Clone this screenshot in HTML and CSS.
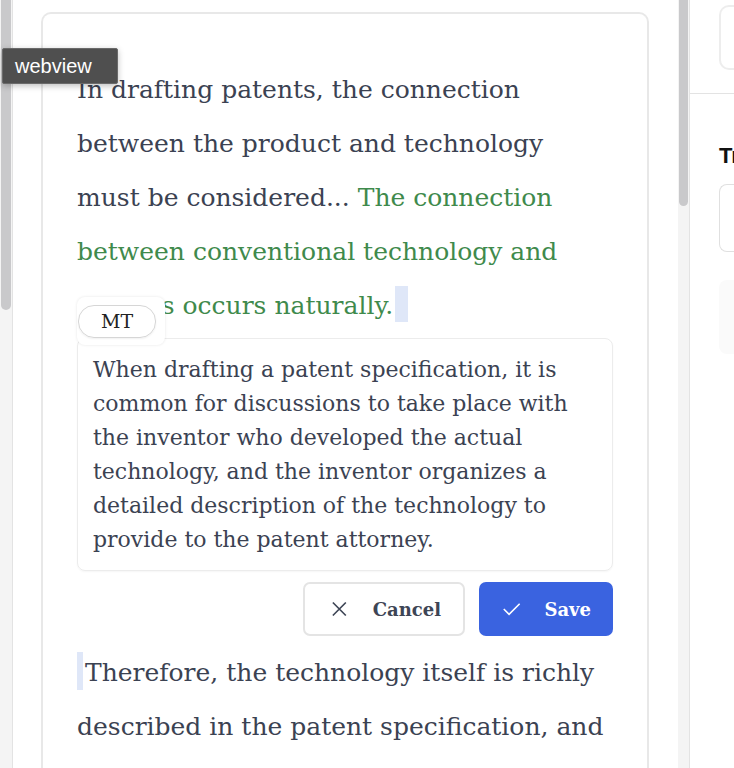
FILE: index.html
```html
<!DOCTYPE html>
<html>
<head>
<meta charset="utf-8">
<link rel="stylesheet" href="styles.css">
</head>
<body>
<div class="app">
  <div class="scroll left"><div class="thumb left-thumb"></div></div>
  <main class="main">
    <div class="card">
      <p class="para">In drafting patents, the connection between the product and technology must be considered... <span class="green">The connection between conventional technology and sources occurs naturally.</span><span class="caret"></span></p>
      <div class="editor">
        <div class="badge-wrap"><span class="badge">MT</span></div>
        <div class="edit-box">When drafting a patent specification, it is common for discussions to take place with the inventor who developed the actual technology, and the inventor organizes a detailed description of the technology to provide to the patent attorney.</div>
        <div class="actions">
          <button class="btn cancel">
            <svg width="18" height="18" viewBox="0 0 18 18"><path d="M2 2L16 16M16 2L2 16" stroke="#3d4555" stroke-width="1.8" fill="none"/></svg>
            <span>Cancel</span>
          </button>
          <button class="btn save">
            <svg width="22" height="18" viewBox="0 0 22 18"><path d="M2 9L8 15L20 3" stroke="#fff" stroke-width="1.8" fill="none"/></svg>
            <span>Save</span>
          </button>
        </div>
      </div>
      <p class="para second"><span class="caret2"></span>Therefore, the technology itself is richly described in the patent specification, and the inventor's perspective is reflected.</p>
    </div>
  </main>
  <div class="scroll right"><div class="thumb right-thumb"></div></div>
  <aside class="side">
    <div class="side-top"><div class="side-box"></div></div>
    <div class="side-body">
      <div class="side-title">Translation</div>
      <div class="side-input"></div>
      <div class="side-gray"></div>
    </div>
  </aside>
</div>
<div class="tooltip">webview</div>
</body>
</html>
```
FILE: styles.css
```css
html, body {
  margin: 0;
  padding: 0;
  width: 734px;
  height: 768px;
  overflow: hidden;
  background: #fff;
}
.app {
  display: flex;
  height: 768px;
}
.scroll {
  width: 12px;
  flex: none;
  background: #f4f4f4;
  border-right: 1px solid #e3e3e3;
  padding: 0 1px;
  box-sizing: border-box;
}
.scroll.left { width: 13px; }
.thumb {
  background: #c9c9cb;
  border-radius: 0 0 5px 5px;
}
.left-thumb { height: 310px; }
.right-thumb { height: 206px; }
.main {
  width: 665px;
  flex: none;
  padding: 12px 29px 0 28px;
  box-sizing: border-box;
  overflow: hidden;
}
.card {
  border: 2px solid #e8e8e8;
  border-bottom: none;
  border-radius: 10px 10px 0 0;
  height: 800px;
  padding: 49px 34px 0 34px;
  box-sizing: border-box;
}
.para {
  margin: 0;
  font-family: "DejaVu Serif", serif;
  font-size: 25px;
  line-height: 54px;
  color: #3b4252;
}
.green { color: #3f8a4c; }
.caret {
  display: inline-block;
  width: 13px;
  height: 36px;
  background: #dfe7f8;
  vertical-align: -8px;
  margin-left: 2px;
}
.caret2 {
  display: inline-block;
  width: 6px;
  height: 38px;
  background: #dfe7f8;
  vertical-align: -9px;
  margin-right: 2px;
}
.editor {
  position: relative;
  margin-top: 5px;
}
.badge-wrap {
  position: absolute;
  left: 0;
  top: -41px;
  width: 88px;
  height: 48px;
  box-sizing: border-box;
  background: #fff;
  border-radius: 8px;
  box-shadow: 0 0 3px rgba(0,0,0,0.1);
}
.badge {
  display: block;
  border: 1px solid #d6d6d6;
  border-radius: 16px;
  width: 78px;
  height: 33px;
  box-sizing: border-box;
  text-align: center;
  font-family: "DejaVu Serif", serif;
  font-size: 19px;
  line-height: 31px;
  color: #222;
  margin: 8px 0 0 1px;
  box-shadow: 0 1px 2px rgba(0,0,0,0.06);
}
.edit-box {
  border: 1px solid #ececec;
  border-radius: 8px;
  padding: 14px 15px 13px 15px;
  font-family: "DejaVu Serif", serif;
  font-size: 22px;
  line-height: 34px;
  color: #3b4252;
  box-shadow: 0 1px 2px rgba(0,0,0,0.04);
}
.actions {
  display: flex;
  justify-content: flex-end;
  gap: 14px;
  margin-top: 11px;
  margin-bottom: 10px;
}
.btn {
  display: flex;
  align-items: center;
  height: 54px;
  border-radius: 7px;
  font-family: "DejaVu Serif", serif;
  font-size: 18px;
  font-weight: bold;
  padding: 0 22px 0 26px;
  gap: 25px;
  box-sizing: border-box;
}
.cancel {
  width: 162px;
  background: #fff;
  border: 2px solid #e4e4e4;
  color: #3d4555;
}
.save {
  width: 134px;
  background: #3a63e0;
  border: none;
  color: #fff;
  padding-left: 23px;
  gap: 23px;
}
.side {
  width: 44px;
  flex: none;
  overflow: hidden;
}
.side-top {
  height: 94px;
  border-bottom: 1px solid #e3e3e3;
  padding: 5px 0 0 29px;
  box-sizing: border-box;
}
.side-box {
  width: 80px;
  height: 65px;
  border: 2px solid #ededed;
  border-right: none;
  border-radius: 10px 0 0 10px;
  box-sizing: border-box;
}
.side-body {
  padding: 50px 0 0 29px;
}
.side-title {
  font-family: "Liberation Sans", sans-serif;
  font-size: 22px;
  font-weight: bold;
  color: #111;
  white-space: nowrap;
  height: 24px;
  line-height: 24px;
}
.side-input {
  margin-top: 16px;
  width: 80px;
  height: 66px;
  border: 1px solid #e0e0e0;
  border-right: none;
  border-radius: 8px 0 0 8px;
}
.side-gray {
  margin-top: 28px;
  width: 80px;
  height: 74px;
  background: #fafafa;
  border-radius: 8px 0 0 8px;
}
.tooltip {
  position: absolute;
  left: 2px;
  top: 48px;
  width: 116px;
  height: 36px;
  box-sizing: border-box;
  background: #4f4f4f;
  border: 1px solid #6a6a6a;
  border-radius: 2px;
  color: #fff;
  font-family: "Liberation Sans", sans-serif;
  font-size: 20px;
  line-height: 34px;
  padding-left: 12px;
  box-shadow: 0 2px 6px rgba(0,0,0,0.25);
}
```
